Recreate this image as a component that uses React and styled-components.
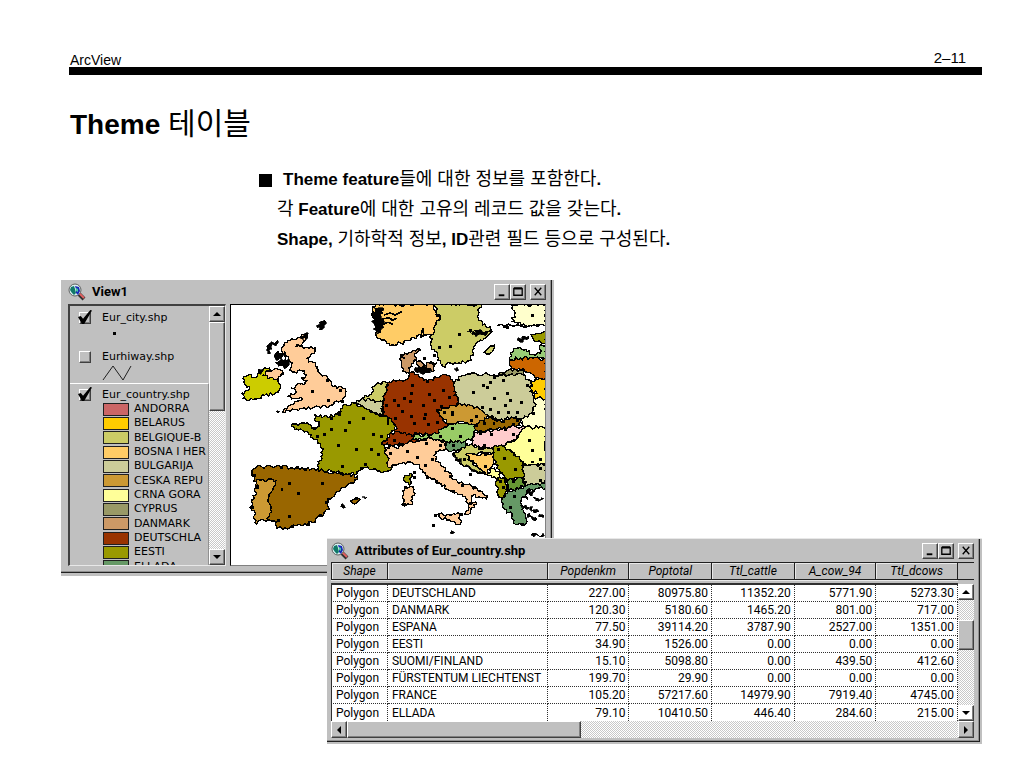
import React from 'react';
import styled, { createGlobalStyle, css } from 'styled-components';

const GlobalStyle = createGlobalStyle`
  *,
  *::before,
  *::after {
    box-sizing: border-box;
  }

  body {
    margin: 0;
    background: #fff;
    color: #000;
    font-family: 'Liberation Sans', 'Noto Sans CJK KR', sans-serif;
  }
`;

const raised = css`
  border: 1px solid;
  border-color: #fff #404040 #404040 #fff;
  box-shadow: inset -1px -1px 0 #808080;
`;

const dither = css`
  background: repeating-conic-gradient(#fff 0 25%, #c8c8c8 0 50%) 0 0 / 2px 2px;
`;

const Page = styled.main`
  padding: 48px 42px 24px 61px;
`;

const PageHeader = styled.header`
  display: flex;
  justify-content: space-between;
  margin-left: 8px;
  padding: 0 16px 0 1px;
  border-bottom: 8px solid #000;
  font-size: 15px;
  line-height: 19px;
`;

const Product = styled.span`
  padding-top: 5px;
  font-size: 14px;
  line-height: 14px;
`;

const Title = styled.h1`
  height: 36px;
  margin: 32px 0 0 9px;
  font-size: 28px;
  line-height: 36px;
`;

const Korean = styled.span`
  font-size: ${props => props.$size || 18}px;
  font-weight: 400;
  line-height: 1;
`;

const Points = styled.div`
  margin: 22px 0 25px 216px;
  font-size: 17px;
  font-weight: 700;
  line-height: 30px;
`;

const Point = styled.p`
  display: flex;
  align-items: center;
  height: 30px;
  margin: 0;
  white-space: pre;

  &::before {
    content: '';
    display: ${props => (props.$bullet ? 'block' : 'none')};
    width: 13px;
    height: 13px;
    margin: 0 11px 0 -18px;
    background: #000;
  }
`;

const Window = styled.section`
  position: relative;
  max-width: 100%;
  padding: 0 2px 3px 0;
  background: #c0c0c0;
`;

const ViewWindow = styled(Window)`
  width: 493px;
`;

const TableWindow = styled(Window)`
  width: 655px;
  margin: -38px 0 0 auto;
  padding-bottom: 2px;
  border-top: 1px solid #e8e8e8;
`;

const Frame = styled.div`
  padding: 0 5px ${props => props.$bottom}px ${props => props.$left}px;
  border-right: 1px solid #202020;
  border-bottom: 1px solid #202020;
  box-shadow: inset -1px -1px 0 #909090;
`;

const TitleBar = styled.div`
  display: flex;
  align-items: center;
  height: ${props => props.$height}px;
`;

const WindowTitle = styled.h2`
  flex: 1;
  margin: 0 0 0 6px;
  font-family: Roboto, sans-serif;
  font-size: 13px;
  line-height: 16px;
`;

const WindowButton = styled.button`
  ${raised}
  display: flex;
  width: 16px;
  height: 16px;
  padding: 0;
  margin-left: ${props => (props.$apart ? 4 : 0)}px;
  background: #c0c0c0;
`;

const ViewBody = styled.div`
  display: flex;
  gap: 4px;
  height: 262px;
`;

const LegendPanel = styled.div`
  display: flex;
  flex: none;
  width: 158px;
  border: 1px solid;
  border-width: 2px 1px 1px 2px;
  border-color: #404040 #e8e8e8 #e8e8e8 #404040;
`;

const Legend = styled.div`
  flex: 1;
  min-width: 0;
  overflow: hidden;
  font-family: 'DejaVu Sans', sans-serif;
  font-size: 11px;
  line-height: 14px;
`;

const Theme = styled.div`
  height: ${props => props.$height}px;
  padding: ${props => (props.$active ? 4 : 5)}px 0 0 9px;
  ${props => props.$active && css`
    border-top: 1px solid #fff;
    border-right: 1px solid #909090;
  `}
`;

const ThemeLabel = styled.label`
  display: flex;
  align-items: center;
  gap: 11px;
  white-space: nowrap;
`;

const Check = styled.input`
  ${raised}
  appearance: none;
  flex: none;
  width: 12px;
  height: 12px;
  margin: 0;
  background: #c0c0c0;

  &:checked::after {
    content: '';
    display: block;
    width: 14px;
    height: 14px;
    margin: -3px 0 0 -2px;
    background: #000;
    clip-path: polygon(0 50%, 20% 42%, 36% 62%, 88% 0, 100% 4%, 44% 100%, 28% 100%);
  }
`;

const SymbolSvg = styled.svg`
  display: block;
  margin-left: 22px;
`;

const Classes = styled.ul`
  display: grid;
  grid-template-rows: repeat(12, 1fr);
  height: 172px;
  margin: 0;
  padding: 0 0 0 24px;
  list-style: none;
`;

const ClassItem = styled.li`
  display: flex;
  align-items: center;
  gap: 5px;
  white-space: nowrap;

  &::before {
    content: '';
    flex: none;
    width: 26px;
    height: 13px;
    border: 1px solid #202020;
    background: ${props => props.$color};
  }
`;

const Scrollbar = styled.div`
  ${dither}
  display: flex;
  flex: ${props => (props.$fill ? '1' : 'none')};
  flex-direction: ${props => (props.$horizontal ? 'row' : 'column')};
  ${props => (props.$horizontal ? 'height: 17px;' : 'width: 16px;')}
`;

const ArrowButton = styled.button`
  ${raised}
  display: flex;
  align-items: center;
  justify-content: center;
  flex: none;
  width: 16px;
  height: ${props => props.$height || 16}px;
  padding: 0;
  background: ${props => (props.$light ? '#fff' : '#c0c0c0')};
`;

const Thumb = styled.div`
  ${raised}
  flex: none;
  background: #c0c0c0;
  ${props => (props.$horizontal ? 'width' : 'height')}: ${props => props.$size}px;
`;

const Gap = styled.div`
  flex: ${props => (props.$size ? `0 0 ${props.$size}px` : '1')};
`;

const MapPanel = styled.div`
  flex: 1;
  min-width: 0;
  overflow: hidden;
  border: 1px solid;
  border-color: #000 #808080 #808080 #000;
  background: #fff;

  svg {
    display: block;
    width: 100%;
    height: 100%;
  }
`;

const TableBody = styled.div`
  display: flex;
`;

const TableSide = styled.div`
  display: flex;
  flex-direction: column;
  width: 16px;
`;

const Corner = styled.div`
  height: 18px;
  margin-bottom: 4px;
  border: 1px solid #202020;
  border-width: 1px 0;
`;

const Table = styled.table`
  flex: 1;
  min-width: 0;
  table-layout: fixed;
  border-spacing: 0;
  background: #fff;
  font-family: Roboto, sans-serif;
  font-size: 12px;
  line-height: 16px;
`;

const HeadCell = styled.th`
  height: 18px;
  padding: 0;
  border: 1px solid #202020;
  border-width: 1px 1px 1px 0;
  background: #c0c0c0;
  box-shadow: inset 1px 1px 0 #e8e8e8;
  font-style: italic;
  font-weight: 400;

  &:first-child {
    border-left-width: 1px;
  }
`;

const Divider = styled.td`
  height: 5px;
  padding: 0;
  border-top: 1px solid #e8e8e8;
  border-bottom: 2px solid #303030;
  background: #c0c0c0;
`;

const Cell = styled.td`
  height: 17px;
  padding: 0 ${props => (props.$number ? 3 : 0)}px 0 4px;
  overflow: hidden;
  border-right: 1px dotted #303030;
  border-bottom: 1px dotted #303030;
  text-align: ${props => (props.$number ? 'right' : 'left')};
  white-space: nowrap;

  &:first-child {
    border-left: 1px solid #303030;
  }

  tr:last-child > & {
    border-bottom: 0;
  }
`;

const classes = [
  ['ANDORRA', '#cc6666'],
  ['BELARUS', '#ffcc00'],
  ['BELGIQUE-B', '#cccc66'],
  ['BOSNA I HER', '#ffcc66'],
  ['BULGARIJA', '#cccc99'],
  ['CESKA REPU', '#cc9933'],
  ['CRNA GORA', '#ffff99'],
  ['CYPRUS', '#999966'],
  ['DANMARK', '#cc9966'],
  ['DEUTSCHLA', '#993300'],
  ['EESTI', '#999900'],
  ['ELLADA', '#669966'],
];

const columns = [
  ['Shape', 57],
  ['Name', 160],
  ['Popdenkm', 82],
  ['Poptotal', 83],
  ['Ttl_cattle', 83],
  ['A_cow_94', 82],
  ['Ttl_dcows', 82],
];

const rows = [
  ['DEUTSCHLAND', '227.00', '80975.80', '11352.20', '5771.90', '5273.30'],
  ['DANMARK', '120.30', '5180.60', '1465.20', '801.00', '717.00'],
  ['ESPANA', '77.50', '39114.20', '3787.90', '2527.00', '1351.00'],
  ['EESTI', '34.90', '1526.00', '0.00', '0.00', '0.00'],
  ['SUOMI/FINLAND', '15.10', '5098.80', '0.00', '439.50', '412.60'],
  ['FÜRSTENTUM LIECHTENST', '199.70', '29.90', '0.00', '0.00', '0.00'],
  ['FRANCE', '105.20', '57217.60', '14979.90', '7919.40', '4745.00'],
  ['ELLADA', '79.10', '10410.50', '446.40', '284.60', '215.00'],
];

// [fill, outline] in map units, drawn in order
const countries = [
  ['#cccc00', '48,305 62,300 72,308 88,305 92,292 105,283 125,280 118,300 150,305 152,325 155,345 140,358 110,362 75,375 45,372 42,355 62,345 64,335 50,328'],
  ['#ffcc99', '105,301 120,290 135,286 155,285 168,298 150,312 128,308'],
  ['#ffcc99', '165,215 180,197 205,195 230,180 240,187 225,205 205,215 262,218 262,228 235,252 255,262 270,275 270,290 300,312 318,335 345,340 355,350 345,378 320,382 310,392 260,398 230,400 200,405 165,412 190,390 205,380 225,372 205,372 180,365 205,352 192,340 205,332 230,330 238,318 222,310 235,300 222,288 200,292 185,285 195,265 175,245 165,235'],
  ['#ffcc66', '435,95 450,88 620,88 628,125 638,128 625,150 632,160 612,182 592,180 575,180 550,195 520,205 495,210 470,195 450,190 445,150 435,125'],
  ['#cccc66', '620,88 630,120 640,125 625,150 610,182 612,215 622,225 630,245 645,275 670,265 725,258 740,240 738,215 755,200 780,185 795,170 790,155 765,150 750,125 752,105 762,88'],
  ['#ffffcc', '852,88 862,120 855,140 900,155 920,150 957,150 957,88'],
  ['#999900', '912,180 930,175 957,170 957,206 930,200 920,198'],
  ['#99cc77', '848,255 850,235 860,222 880,218 900,230 920,240 940,235 938,215 957,205 957,254'],
  ['#ffffcc', '880,435 900,415 918,395 920,365 957,360 957,470 890,460'],
  ['#ffcc00', '915,320 925,312 957,308 957,372 920,368 930,355 908,350'],
  ['#cc6600', '848,255 880,250 957,252 957,308 925,312 900,292 880,285 850,283'],
  ['#999966', '815,298 850,284 890,288 892,302 840,304'],
  ['#cccc99', '680,325 700,305 740,295 800,300 830,300 890,302 912,325 908,350 920,368 925,395 905,420 890,432 860,430 810,435 790,425 760,405 730,395 692,390 692,370 680,345'],
  ['#cccc66', '425,362 440,335 470,320 482,325 480,350 465,380 472,428 440,415 410,400 380,385 400,375'],
  ['#cccc99', '380,385 400,375 425,372 450,380 465,382 470,425 440,415 410,400'],
  ['#993300', '480,325 510,318 535,315 545,292 560,292 575,305 600,318 645,300 670,305 680,325 680,350 692,375 692,395 650,400 628,408 645,435 665,450 635,475 600,480 570,478 550,485 500,480 505,455 485,430 470,425 468,400 465,380 478,350'],
  ['#993300', '462,510 480,490 492,475 520,475 550,480 568,490 570,500 550,502 530,513 515,505 495,520 480,505'],
  ['#cc9966', '520,240 545,232 575,222 580,226 560,240 568,255 552,268 545,292 525,290 522,265'],
  ['#cc9966', '590,272 605,264 628,265 620,288 600,285'],
  ['#cc9966', '566,268 580,258 588,276 574,284'],
  ['#999900', '260,420 290,425 305,428 330,418 345,395 380,385 410,400 440,415 470,425 485,430 505,455 490,475 462,510 480,520 485,550 500,562 510,568 480,590 450,590 420,578 400,580 380,600 345,595 310,590 270,585 280,545 285,530 270,505 255,490 250,480 225,468 200,465 190,455 205,448 245,450 260,460 275,455'],
  ['#996600', '72,590 85,580 130,575 205,580 270,585 340,600 390,605 390,615 345,640 325,655 295,685 300,690 305,705 280,725 255,745 190,755 165,765 145,755 145,742 120,735'],
  ['#cc9933', '88,615 145,618 135,645 120,680 130,700 120,738 80,745 82,715 66,700 85,655'],
  ['#996600', '368,680 385,670 398,675 388,686'],
  ['#999900', '530,608 548,596 555,605 545,632 532,622'],
  ['#ffcc99', '525,650 550,637 560,645 555,690 530,695 525,670'],
  ['#ffcc99', '470,530 485,515 505,520 530,510 545,500 575,500 590,495 615,490 655,500 660,522 625,530 625,560 640,570 665,595 680,615 720,630 750,645 780,665 778,675 755,667 735,663 732,680 748,690 735,700 730,715 712,720 725,700 720,675 705,660 670,650 635,625 600,605 585,585 570,570 540,563 510,570 485,580 478,565 485,552'],
  ['#ffcc99', '630,720 685,720 698,717 698,750 670,740 635,728'],
  ['#99cc66', '552,495 570,480 610,482 635,475 635,465 665,450 690,443 720,445 745,450 742,470 735,490 715,500 675,503 630,495 590,493'],
  ['#669966', '655,503 715,500 710,520 685,530 660,525'],
  ['#cc9933', '628,405 645,400 692,390 730,393 760,405 785,425 770,440 745,450 720,445 690,443 670,448 645,430'],
  ['#996600', '742,462 755,445 785,430 810,440 860,430 880,435 880,453 850,460 800,465 765,473'],
  ['#ffcccc', '735,490 745,473 765,473 800,465 850,457 885,455 892,465 865,495 830,515 770,523 730,510'],
  ['#cccc66', '712,520 730,510 770,523 800,517 805,535 770,535 715,540 745,575 780,600 730,585 695,560 680,535'],
  ['#ffcc66', '715,540 770,538 800,535 805,570 790,580 780,600 750,575'],
  ['#ffff99', '865,495 892,460 957,455 957,570 900,573 885,560 865,545 830,515'],
  ['#cccc99', '885,570 900,573 957,570 957,633 900,635 885,610'],
  ['#999900', '800,517 830,515 850,530 865,545 888,560 885,585 892,600 885,615 850,613 835,610 820,595 805,570'],
  ['#ffff99', '780,598 795,583 820,595 810,615 795,610'],
  ['#999900', '810,610 830,610 835,630 842,650 825,675 810,655'],
  ['#669933', '835,615 888,613 895,630 875,645 840,645'],
  ['#669966', '842,650 875,645 895,635 957,630 955,642 910,645 895,660 902,675 885,668 880,685 905,702 885,705 895,725 900,742 885,753 865,750 855,725 825,695 825,675'],
];

// small islands, drawn as solid ink
const islands = [
  '115,225 125,205 150,195 152,203 130,215 120,238',
  '268,158 275,142 290,135 290,150 275,165',
  '218,190 228,178 242,173 240,188 226,194',
  '138,243 150,230 156,236 168,240 160,252 145,256',
  '142,264 156,258 172,250 184,262 178,278 160,272',
  '90,295 98,284 106,286 98,298',
  '145,410 150,408 155,412 150,416',
  '435,110 455,98 470,105 462,125 470,145 452,175 445,180 440,150',
  '560,285 590,275 600,285 615,284 595,294',
  '870,195 885,185 905,184 905,192 880,202',
  '680,282 690,278 694,286 686,290',
  '720,170 750,167 780,172 775,182 735,180',
  '338,695 350,692 345,702',
  '402,668 418,669 412,674',
  '672,770 682,774 676,779',
  '880,692 890,696 905,700 900,706 886,702',
  '908,698 922,706 936,712 924,716',
  '900,720 915,726 930,734 914,734',
  '936,720 952,724 948,732',
  '918,668 950,672 935,680',
  '900,645 925,652 915,665',
  '912,782 930,778 952,785 920,788',
  '675,535 690,548 704,564 690,560',
  '712,572 740,586 770,598 745,594',
];

const cities = '255,350 300,318 338,348 303,376 345,380 310,430 335,420 366,443 310,465 354,468 290,478 260,462 268,484 408,432 437,480 460,484 332,513 386,523 431,523 453,539 344,577 160,580 210,580 234,586 184,628 162,645 283,628 213,657 184,725 295,683 278,722 242,750 152,737 193,756 80,603 88,640 72,700 400,582 412,570 697,177 728,167 637,218 668,215 915,120 833,155 842,157 930,150 620,240 590,250 555,333 600,320 553,355 605,358 648,348 500,376 530,370 549,381 512,392 622,378 642,396 588,392 525,411 505,430 553,425 560,447 592,432 595,420 665,368 602,448 630,442 650,412 676,420 674,412 738,352 768,333 780,338 802,308 790,322 828,318 900,333 842,355 802,370 850,378 883,382 835,392 765,398 790,403 815,414 845,413 870,414 920,417 748,425 732,437 772,447 800,445 830,440 870,437 860,450 760,475 793,478 835,465 858,478 770,513 640,484 675,460 700,485 565,475 595,495 500,497 540,530 488,535 598,505 570,549 615,555 595,573 640,512 678,513 710,555 755,520 773,540 815,525 775,575 833,550 865,585 908,498 940,555 915,562 940,582 940,618 915,528 858,620 820,622 830,640 862,665 842,640 850,700 885,750 628,620 677,650 705,632 730,600 740,640 670,605 730,688 702,720 625,722 618,752 600,608 562,593 560,610 535,640 530,690 475,392 385,672 655,508 718,508';

const roughen = (outline, amount) => {
  const points = outline.split(' ').map(pair => pair.split(',').map(Number));
  const out = [];
  points.forEach(([x1, y1], i) => {
    const [x2, y2] = points[(i + 1) % points.length];
    const length = Math.hypot(x2 - x1, y2 - y1);
    const steps = Math.max(1, Math.round(length / 6));
    out.push(`${x1},${y1}`);
    for (let s = 1; s < steps; s += 1) {
      const x = x1 + ((x2 - x1) * s) / steps;
      const y = y1 + ((y2 - y1) * s) / steps;
      const noise = Math.sin(x * 12.9898 + y * 78.233) * 43758.5453;
      const shift = (noise - Math.floor(noise) - 0.5) * amount;
      const px = x - ((y2 - y1) / length) * shift;
      const py = y + ((x2 - x1) / length) * shift;
      out.push(`${px.toFixed(1)},${py.toFixed(1)}`);
    }
  });
  return out.join(' ');
};

const EuropeMap = () => (
  <svg
    viewBox="9 90 945 783"
    preserveAspectRatio="xMinYMin slice"
    shapeRendering="crispEdges"
    role="img"
    aria-label="Europe"
  >
    <g stroke="#000" strokeWidth="4" strokeLinejoin="round">
      {countries.map(([fill, outline]) => (
        <polygon key={outline} points={roughen(outline, 11)} fill={fill} />
      ))}
      <polygon points={roughen('770,232 785,218 803,210 798,225 785,238', 5)} fill="#cccc66" />
    </g>
    {islands.map(outline => (
      <polygon key={outline} points={roughen(outline, 14)} stroke="#000" strokeWidth="2" />
    ))}
    <path
      d="M470 120l18-6 15 6 20-10M465 132l20-4 10 8 12-6M462 150l20-8 14 6M580 190l6-30 4 24M810 152l12-4 10 6 12-6 14 6 14-4 20 6 18-2M740 166l30 8 25-8M460 400l6 14M482 430v20M150 228l8 20M170 228l4 30M205 210l20 4M520 245l14 6M600 262l24 8"
      fill="none"
      stroke="#000"
      strokeWidth="5"
    />
    {cities.split(' ').map(city => {
      const [x, y] = city.split(',');
      return <rect key={city} x={x - 4} y={y - 4} width="9" height="9" />;
    })}
  </svg>
);

const AppIcon = () => (
  <svg width="18" height="18" viewBox="0 0 18 18" aria-hidden="true">
    <path d="M11 11l5 5" stroke="#303030" strokeWidth="4" />
    <path d="M11 10l5 5" stroke="#e06060" strokeWidth="2" />
    <circle cx="7" cy="7" r="6" fill="#d8f0f0" stroke="#606060" strokeWidth="1" />
    <path d="M3 4l3-1 1 3 1 4-2 2-2-2-2-3z" fill="#107868" />
    <path d="M7 3l4 1 1 4-2 4-2-2V6z" fill="#1828b8" />
    <path d="M8 5l2 1v3l-2-1z" fill="#40c8a0" />
  </svg>
);

const Arrow = ({ turn = 0 }) => (
  <svg width="8" height="8" viewBox="0 0 8 8" aria-hidden="true">
    <path d="M4 2L8 6H0z" transform={`rotate(${turn} 4 4)`} />
  </svg>
);

const glyphs = {
  Minimize: 'M4 11h6',
  Maximize: 'M3 3h9M3 4h9v7H3z',
  Close: 'M4 3l7 8M11 3l-7 8',
};

const WindowButtons = () => (
  <>
    {Object.keys(glyphs).map(name => (
      <WindowButton key={name} type="button" aria-label={name} $apart={name === 'Close'}>
        <svg width="14" height="14" viewBox="0 0 15 15" fill="none" stroke="#000">
          <path
            d={glyphs[name]}
            strokeWidth={name === 'Minimize' ? 2 : 1.4}
          />
        </svg>
      </WindowButton>
    ))}
  </>
);

const View = () => (
  <ViewWindow>
    <Frame $left={7} $bottom={6}>
      <TitleBar $height={24}>
        <AppIcon />
        <WindowTitle>View1</WindowTitle>
        <WindowButtons />
      </TitleBar>
      <ViewBody>
        <LegendPanel>
          <Legend>
            <Theme $height={39}>
              <ThemeLabel>
                <Check type="checkbox" defaultChecked />
                Eur_city.shp
              </ThemeLabel>
              <SymbolSvg width="30" height="12">
                <rect x="12" y="7" width="3" height="3" />
              </SymbolSvg>
            </Theme>
            <Theme $height={38}>
              <ThemeLabel>
                <Check type="checkbox" />
                Eurhiway.shp
              </ThemeLabel>
              <SymbolSvg width="32" height="18">
                <path d="M2 16L12 2l10 14L30 2" fill="none" stroke="#202020" />
              </SymbolSvg>
            </Theme>
            <Theme $height={200} $active>
              <ThemeLabel>
                <Check type="checkbox" defaultChecked />
                Eur_country.shp
              </ThemeLabel>
              <Classes>
                {classes.map(([name, color]) => (
                  <ClassItem key={name} $color={color}>{name}</ClassItem>
                ))}
              </Classes>
            </Theme>
          </Legend>
          <Scrollbar>
            <ArrowButton type="button" aria-label="Scroll up"><Arrow /></ArrowButton>
            <Thumb $size={89} />
            <Gap />
            <ArrowButton type="button" aria-label="Scroll down"><Arrow turn={180} /></ArrowButton>
          </Scrollbar>
        </LegendPanel>
        <MapPanel>
          <EuropeMap />
        </MapPanel>
      </ViewBody>
    </Frame>
  </ViewWindow>
);

const Attributes = () => (
  <TableWindow>
    <Frame $left={4} $bottom={3}>
      <TitleBar $height={23}>
        <AppIcon />
        <WindowTitle>Attributes of Eur_country.shp</WindowTitle>
        <WindowButtons />
      </TitleBar>
      <TableBody>
        <Table>
          <colgroup>
            {columns.map(([name, width]) => <col key={name} width={width} />)}
          </colgroup>
          <thead>
            <tr>
              {columns.map(([name]) => <HeadCell key={name} scope="col">{name}</HeadCell>)}
            </tr>
            <tr>
              <Divider colSpan={columns.length} />
            </tr>
          </thead>
          <tbody>
            {rows.map(([name, ...numbers]) => (
              <tr key={name}>
                <Cell>Polygon</Cell>
                <Cell>{name}</Cell>
                {numbers.map((number, i) => (
                  <Cell key={columns[i + 2][0]} $number>{number}</Cell>
                ))}
              </tr>
            ))}
          </tbody>
        </Table>
        <TableSide>
          <Corner />
          <Scrollbar $fill>
            <ArrowButton type="button" aria-label="Scroll up" $light><Arrow /></ArrowButton>
            <Gap $size={20} />
            <Thumb $size={30} />
            <Gap />
            <ArrowButton type="button" aria-label="Scroll down" $light><Arrow turn={180} /></ArrowButton>
          </Scrollbar>
        </TableSide>
      </TableBody>
      <Scrollbar $horizontal>
        <ArrowButton type="button" aria-label="Scroll left" $height={17}><Arrow turn={-90} /></ArrowButton>
        <Thumb $size={234} $horizontal />
        <Gap />
        <ArrowButton type="button" aria-label="Scroll right" $height={17}><Arrow turn={90} /></ArrowButton>
      </Scrollbar>
    </Frame>
  </TableWindow>
);

const App = () => (
  <>
    <GlobalStyle />
    <Page>
      <PageHeader>
        <Product>ArcView</Product>
        <span>2–11</span>
      </PageHeader>
      <Title>Theme <Korean $size={30}>테이블</Korean></Title>
      <Points>
        <Point $bullet>
          <span>Theme feature<Korean>들에 대한 정보를 포함한다</Korean>.</span>
        </Point>
        <Point>
          <span><Korean>각</Korean> Feature<Korean>에 대한 고유의 레코드 값을 갖는다</Korean>.</span>
        </Point>
        <Point>
          <span>Shape, <Korean>기하학적 정보</Korean>, ID<Korean>관련 필드 등으로 구성된다</Korean>.</span>
        </Point>
      </Points>
      <View />
      <Attributes />
    </Page>
  </>
);

export default App;
